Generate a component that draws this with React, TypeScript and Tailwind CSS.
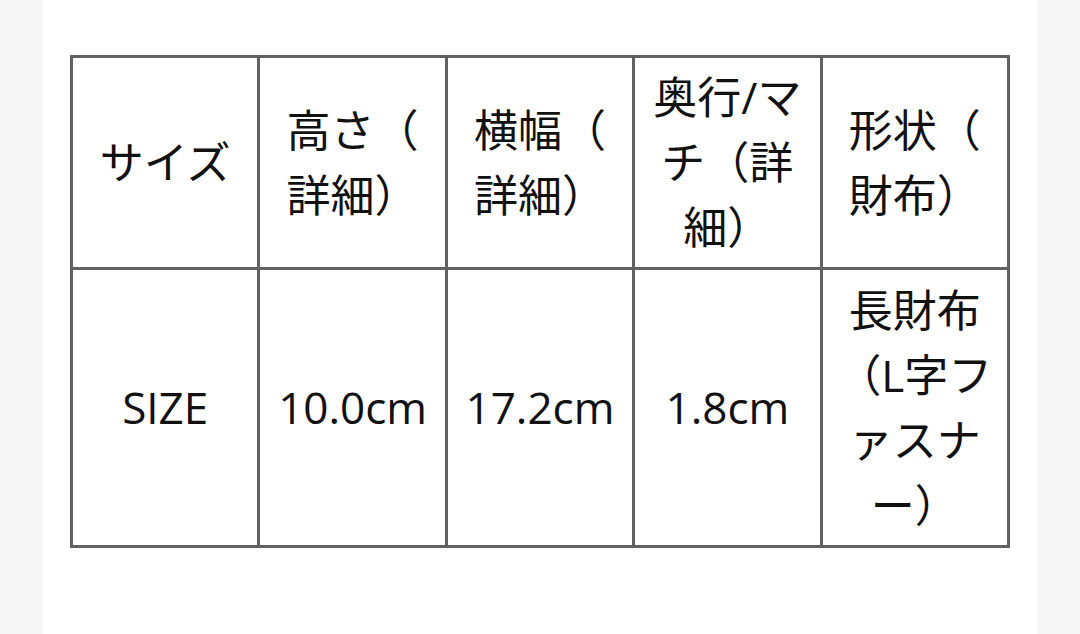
import React from 'react';

const headers: string[][] = [
    ['サイズ'],
    ['高さ（', '詳細）'],
    ['横幅（', '詳細）'],
    ['奥行/マ', 'チ（詳', '細）'],
    ['形状（', '財布）'],
];

const values: string[][] = [
    ['SIZE'],
    ['10.0cm'],
    ['17.2cm'],
    ['1.8cm'],
    ['長財布', '（L字フ', 'ァスナ', 'ー）'],
];

const Cell: React.FC<{ lines: string[] }> = ({ lines }) => (
    <td className="border-[3px] border-[#616161] px-2 py-[7px] text-center align-middle whitespace-nowrap">
        {lines.map((line, i) => (
            <React.Fragment key={i}>
                {i > 0 && <br />}
                {line}
            </React.Fragment>
        ))}
    </td>
);

const App: React.FC = () => {
    return (
        <div className="min-h-[634px] bg-[#f6f6f6] flex justify-center">
            <div
                className="w-[994px] min-h-[634px] bg-white pt-[55px] px-[27px]"
                style={{ fontFamily: '"Open Sans", "Noto Sans CJK JP", sans-serif' }}
            >
                {/* size table */}
                <table className="w-[940px] table-fixed border-collapse text-[44px] leading-[65px] text-[#111111]">
                    <tbody>
                        <tr className="h-[212px]">
                            {headers.map((lines, i) => (
                                <Cell key={i} lines={lines} />
                            ))}
                        </tr>
                        <tr className="h-[278px]">
                            {values.map((lines, i) => (
                                <Cell key={i} lines={lines} />
                            ))}
                        </tr>
                    </tbody>
                </table>
            </div>
        </div>
    );
};

export default App;
